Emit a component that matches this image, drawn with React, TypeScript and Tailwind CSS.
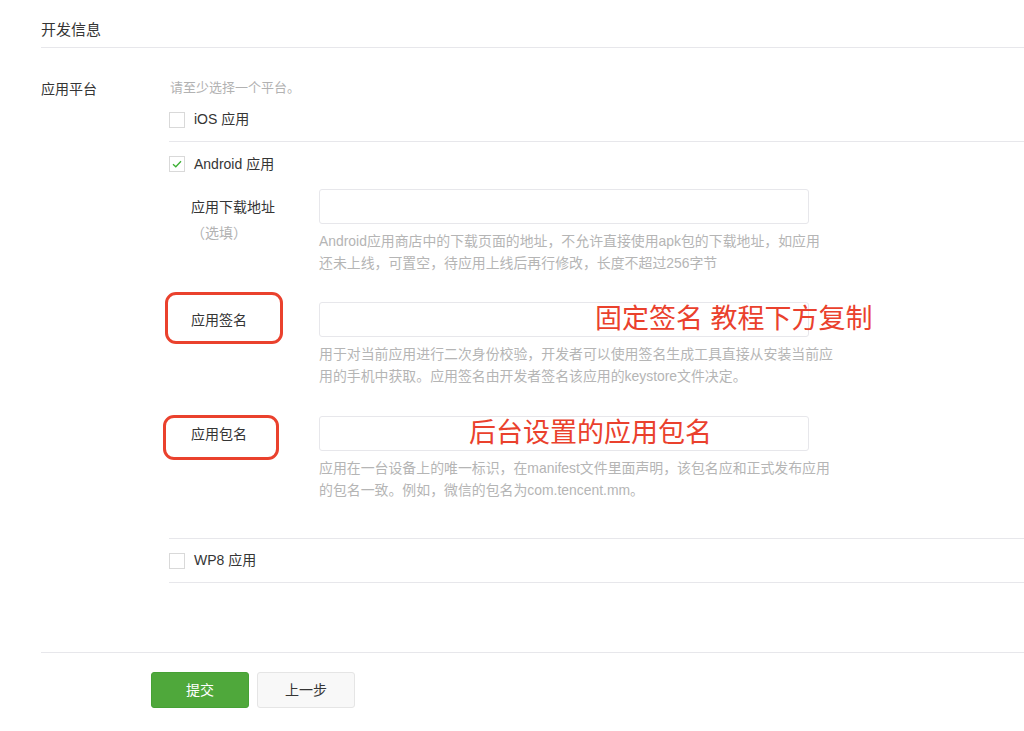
const font = { fontFamily: '"Liberation Sans", "Noto Sans CJK SC", sans-serif' };

function Checkbox({ checked }: { checked?: boolean }) {
  return (
    <span className="w-4 h-4 border border-[#d9d9d9] bg-white flex items-center justify-center shrink-0">
      {checked && (
        <svg width="10" height="8" viewBox="0 0 10 8" fill="none">
          <path d="M1 4.2 L3.8 6.8 L9 1.2" stroke="#3cb034" strokeWidth="1.3" />
        </svg>
      )}
    </span>
  );
}

function Field({
  label,
  sub,
  help,
  note,
  noteLeft,
  box,
}: {
  label: string;
  sub?: string;
  help: string[];
  note?: string;
  noteLeft?: string;
  box?: string;
}) {
  return (
    <div className="flex relative">
      {box && <div className={`absolute border-[3px] border-[#ea412d] rounded-[11px] ${box}`} />}
      <div className="w-[128px] shrink-0 pt-[8px]">
        <div className="text-[14px] leading-[20px] text-[#353535]">{label}</div>
        {sub && <div className="text-[14px] leading-[20px] mt-[6px] text-[#b2b2b2]">{sub}</div>}
      </div>
      <div className="w-[490px]">
        <div className="h-[35px] border border-[#e7e7eb] rounded-[3px] bg-white relative">
          {note && (
            <span className={`absolute top-[1px] text-[27px] leading-[30px] text-[#ea412d] whitespace-nowrap ${noteLeft}`}>
              {note}
            </span>
          )}
        </div>
        <div className="mt-[6px] text-[13.9px] leading-[22px] text-[#b5b5b5] whitespace-nowrap">
          {help.map((h) => (
            <div key={h}>{h}</div>
          ))}
        </div>
      </div>
    </div>
  );
}

export default function App() {
  return (
    <div className="bg-white w-[1024px] h-[731px] overflow-hidden pl-[41px]" style={font}>
      <div className="h-[48px] pt-[20px] border-b border-[#e7e7eb] text-[15px] leading-[20px] text-[#353535]">
        开发信息
      </div>

      <div className="flex pt-[30px]">
        <div className="w-[128px] shrink-0 text-[14px] leading-[20px] text-[#353535] pt-[1px]">应用平台</div>
        <div className="flex-1">
          <div className="text-[13px] leading-[20px] text-[#b2b2b2] pl-[1px]">请至少选择一个平台。</div>

          <div className="h-[44px] flex items-center gap-[9px] border-b border-[#e7e7eb]">
            <Checkbox />
            <span className="text-[14px] text-[#353535]">iOS 应用</span>
          </div>

          <div className="border-b border-[#e7e7eb] pb-[37px]">
            <div className="h-[44px] flex items-center gap-[9px]">
              <Checkbox checked />
              <span className="text-[14px] text-[#353535]">Android 应用</span>
            </div>
            <div className="pl-[22px] pt-[3px] flex flex-col">
              <Field
                label="应用下载地址"
                sub="（选填）"
                help={[
                  "Android应用商店中的下载页面的地址，不允许直接使用apk包的下载地址，如应用",
                  "还未上线，可置空，待应用上线后再行修改，长度不超过256字节",
                ]}
              />
              <div className="h-[28px]" />
              <Field
                label="应用签名"
                box="left-[-26px] top-[-10px] w-[118px] h-[52px]"
                note="固定签名 教程下方复制"
                noteLeft="left-[275px]"
                help={[
                  "用于对当前应用进行二次身份校验，开发者可以使用签名生成工具直接从安装当前应",
                  "用的手机中获取。应用签名由开发者签名该应用的keystore文件决定。",
                ]}
              />
              <div className="h-[29px]" />
              <Field
                label="应用包名"
                box="left-[-28px] top-[-1px] w-[116px] h-[45px]"
                note="后台设置的应用包名"
                noteLeft="left-[149px]"
                help={[
                  "应用在一台设备上的唯一标识，在manifest文件里面声明，该包名应和正式发布应用",
                  "的包名一致。例如，微信的包名为com.tencent.mm。",
                ]}
              />
            </div>
          </div>

          <div className="h-[44px] flex items-center gap-[9px] border-b border-[#e7e7eb]">
            <Checkbox />
            <span className="text-[14px] text-[#353535]">WP8 应用</span>
          </div>
        </div>
      </div>

      <div className="mt-[69px] border-t border-[#e7e7eb] pt-[19px] pl-[110px] flex gap-[8px]">
        <button className="w-[98px] h-[36px] rounded-[3px] bg-[#4fa83b] border border-[#46a135] text-white text-[14px]">
          提交
        </button>
        <button className="w-[98px] h-[36px] rounded-[3px] bg-[#f8f8f8] border border-[#e5e5e5] text-[#353535] text-[14px]">
          上一步
        </button>
      </div>
    </div>
  );
}
